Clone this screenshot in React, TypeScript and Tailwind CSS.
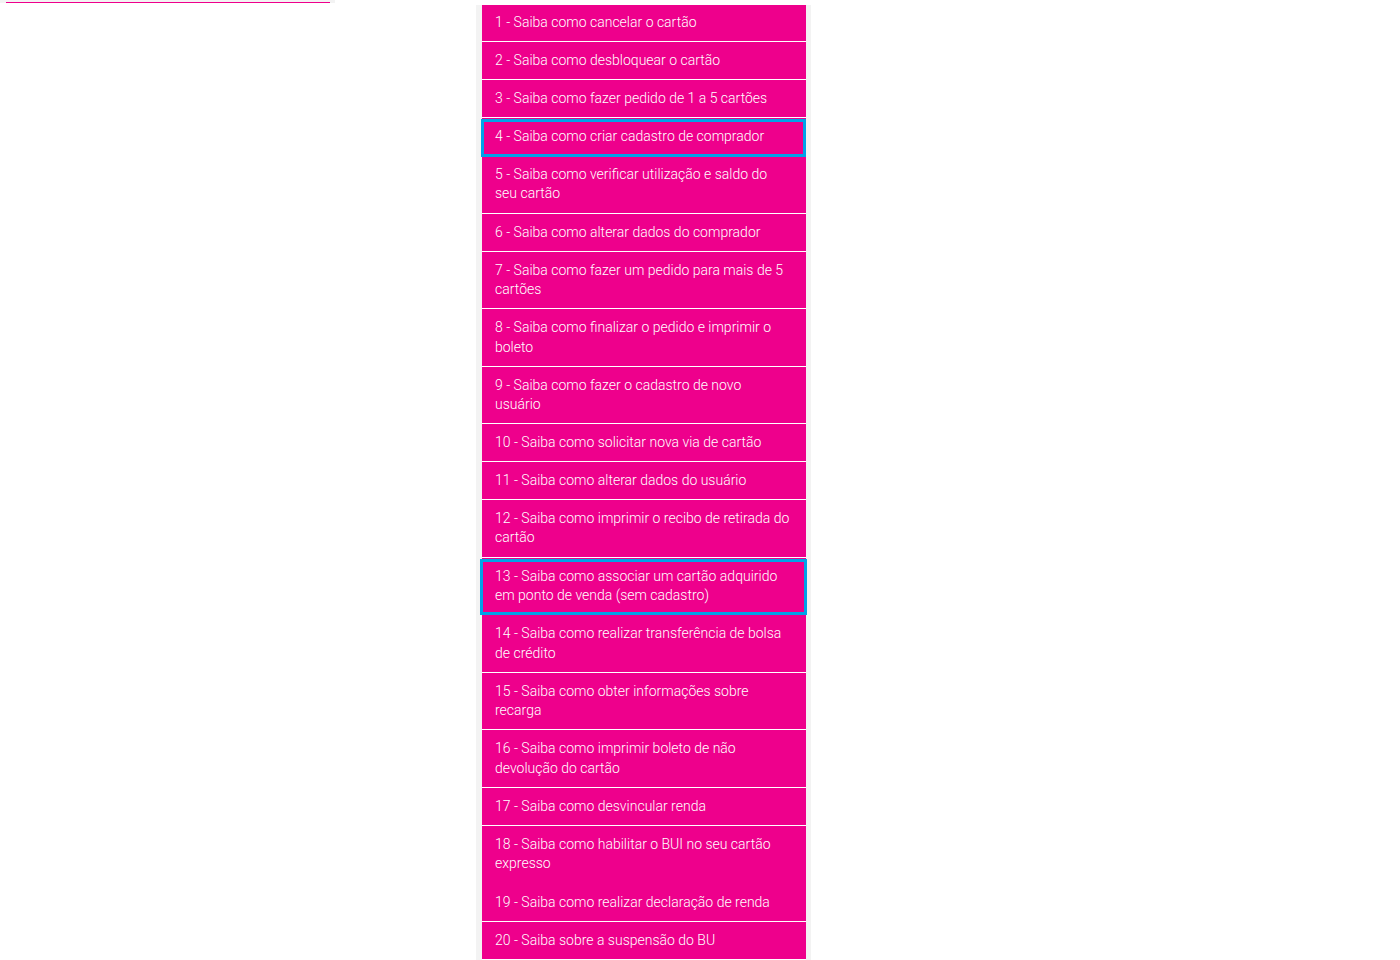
import { clsx } from "clsx";

type Topic = {
  text: string;
  size: "single" | "double" | "doubleTall" | "doubleLoose";
  divider?: boolean;
  highlight?: string;
};

const topics: Topic[] = [
  { text: "Saiba como cancelar o cartão", size: "single" },
  { text: "Saiba como desbloquear o cartão", size: "single" },
  { text: "Saiba como fazer pedido de 1 a 5 cartões", size: "single" },
  {
    text: "Saiba como criar cadastro de comprador",
    size: "single",
    highlight: "top-px right-0 -bottom-0.5 -left-px",
  },
  { text: "Saiba como verificar utilização e saldo do seu cartão", size: "doubleTall" },
  { text: "Saiba como alterar dados do comprador", size: "single" },
  { text: "Saiba como fazer um pedido para mais de 5 cartões", size: "double" },
  { text: "Saiba como finalizar o pedido e imprimir o boleto", size: "doubleLoose" },
  { text: "Saiba como fazer o cadastro de novo usuário", size: "double" },
  { text: "Saiba como solicitar nova via de cartão", size: "single" },
  { text: "Saiba como alterar dados do usuário", size: "single" },
  { text: "Saiba como imprimir o recibo de retirada do cartão", size: "doubleTall" },
  {
    text: "Saiba como associar um cartão adquirido em ponto de venda (sem cadastro)",
    size: "double",
    highlight: "top-px -right-px -bottom-px -left-0.5",
  },
  { text: "Saiba como realizar transferência de bolsa de crédito", size: "doubleLoose" },
  { text: "Saiba como obter informações sobre recarga", size: "double" },
  { text: "Saiba como imprimir boleto de não devolução do cartão", size: "doubleLoose" },
  { text: "Saiba como desvincular renda", size: "single" },
  { text: "Saiba como habilitar o BUI no seu cartão expresso", size: "doubleTall", divider: false },
  { text: "Saiba como realizar declaração de renda", size: "single" },
  { text: "Saiba sobre a suspensão do BU", size: "single" },
];

const sizes = {
  single: "min-h-[38px] pt-[9px] leading-[19px]",
  double: "min-h-[57px] pt-[9px] leading-[19px]",
  doubleTall: "min-h-[58px] pt-[9px] leading-[19px]",
  doubleLoose: "min-h-[58px] pt-2 leading-5",
};

function TopicRow({ topic, index }: { topic: Topic; index: number }) {
  return (
    <li
      className={clsx(
        "relative flex border-b",
        index === 0 ? "min-h-[37px] pt-2 leading-[19px]" : sizes[topic.size],
        topic.divider === false ? "border-[#ee008c]" : "border-white",
      )}
    >
      <a href={`#topico-${index + 1}`} className="block flex-1 pr-4 pl-[13px]">
        {`${index + 1} - ${topic.text}`}
      </a>
      {topic.highlight && (
        <span
          aria-hidden="true"
          className={clsx(
            "pointer-events-none absolute z-10 border-3 border-[#00a2e8]",
            topic.highlight,
          )}
        />
      )}
    </li>
  );
}

export default function App() {
  return (
    <main className="grid grid-cols-[34%_24%_1fr] items-start bg-white font-['Roboto',sans-serif]">
      <div className="max-w-[335px] bg-[#f3f3f3] pt-0.5 pr-[5px] pl-1.5">
        <hr className="border-t border-[#ee008c]" />
      </div>
      <nav aria-label="Tópicos de ajuda" className="mt-[5px] max-w-[335px] bg-[#f3f3f3] pr-[5px] pl-1.5">
        <ol className="bg-[#ee008c] text-[14px] font-light text-white">
          {topics.map((topic, index) => (
            <TopicRow key={topic.text} topic={topic} index={index} />
          ))}
        </ol>
      </nav>
    </main>
  );
}
